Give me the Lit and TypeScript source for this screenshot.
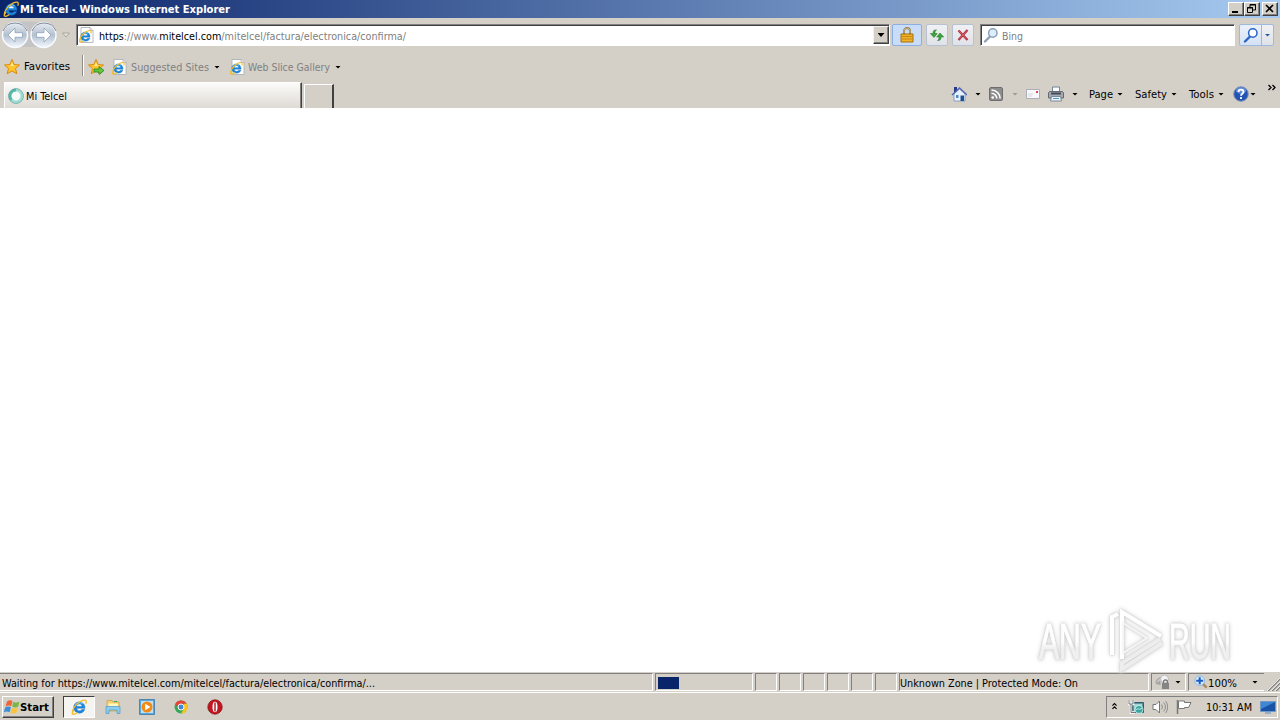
import { LitElement, css, html, svg } from "lit";
import { customElement, property } from "lit/decorators.js";

const ieLetter = svg`
  <path d="M14 9.300H5.800c.2 3 4 3.300 5 1.200h3C12 16 2.700 15.200 2.700 8.500 2.700.9 14.300.9 14 9.300z" fill="#1c86dc" stroke="#1465b4" stroke-width=".4" />
  <path d="M5.900 7.200h4.900C10.500 4.600 6.300 4.600 5.900 7.200z" fill="#e8f5ff" />
  <path d="M4.500 5.500C6 3.700 9 3.200 11.500 4.500" fill="none" stroke="#7fd0fa" stroke-width="1" />
  <path d="M3 11C-.800 16 2.300 16.300 6.500 13.500M1.300 13.200C1.500 8 9.500.9 14 1.200c1.800.2 1.300 2.300.7 3.500" fill="none" stroke="#f2bd2c" stroke-width="1.300" />
`;

const star = svg`<path d="M8 .5l2.200 5 5.300.5-4 3.500 1.300 5.200L8 12l-4.800 2.700 1.300-5.200L.500 6l5.300-.5z" fill="#ffc32b" stroke="#d9820b" stroke-width=".9" /><path d="M8 3l1.200 3.500L12 7H5l2-.8z" fill="#fff0a0" />`;

const glass = (rim: string, fill: string) => svg`
  <path d="M7 9.500L2 14.500" stroke="${rim}" stroke-width="2.400" stroke-linecap="round" />
  <circle cx="9.800" cy="6" r="4.200" fill="${fill}" stroke="${rim}" stroke-width="1.500" />
`;

const arrow = svg`<path d="M12 5L5 12l7 7v-4.700h7.500V9.700H12z" fill="#fff" stroke="#8ba3bd" stroke-width=".8" />`;

const icons: Record<string, unknown> = {
  ie: ieLetter,
  page: svg`<path d="M3 .5h9l3 3v12H3z" fill="#fff" stroke="#a5abb3" stroke-width=".8" /><path d="M12 .5v3h3" fill="#dfe6ef" stroke="#9aa0a8" stroke-width=".6" /><g transform="translate(.5 2.500) scale(.83)">${ieLetter}</g>`,
  star,
  addstar: svg`${star}<path d="M6 10h5V7.500l5 4-5 4V13H6z" fill="#62c83a" stroke="#258522" stroke-width=".8" />`,
  spinner: svg`<circle cx="8" cy="8" r="6" fill="#f4fbfa" stroke="#a0dcd4" stroke-width="3" /><path d="M8 2a6 6 0 0 0-4.500 10" fill="none" stroke="#54b8a9" stroke-width="2.600" /><circle cx="8" cy="8" r="7.500" fill="none" stroke="#579c95" stroke-width=".6" />`,
  lock: svg`<path d="M5 7V4a3 3 0 0 1 6 0v3" fill="none" stroke="#8b7445" stroke-width="1.800" /><path d="M5 6V4a3 3 0 0 1 6 0v2" fill="none" stroke="#e9d9a9" stroke-width=".6" /><path d="M2 7h12v8H2z" fill="#f0b32a" stroke="#a76d0b" /><path d="M3 9.500h10M3 12h10" stroke="#c68719" />`,
  refresh: svg`<path d="M7.500 3C4.800 2.500 4 4 4 6.500H1.300L5 10.500 8.300 6.500H6c0-1.700 0-2.500 1.500-3.500z" fill="#3da33a" stroke="#1c7426" stroke-width=".5" /><path d="M8.500 13.500c2.700.5 3.500-1 3.500-3.500h2.700L11 6 7.700 10H10c0 1.700 0 2.500-1.500 3.500z" fill="#3da33a" stroke="#1c7426" stroke-width=".5" />`,
  stop: svg`<path d="M3.500 3.500L12.500 13M12.500 3L3.500 13" stroke="#a92b3c" stroke-width="2.200" /><path d="M4 4l8 8.500M12 3.500l-8 9" stroke="#ef6f6e" stroke-width=".8" />`,
  glass: glass("#8ba0b5", "#dceefb"),
  search: glass("#2865c4", "#fff"),
  home: svg`<path d="M3 1h3v5H3z" fill="#273a83" /><path d="M3 8l5.500-5L14 8v7H3z" fill="#e9f2fc" stroke="#7a91ba" stroke-width=".8" /><path d="M1 9l7.500-7L16 9" fill="none" stroke="#5268ae" stroke-width="1.500" /><path d="M9.500 9.500H13V15H9.500z" fill="#1c4f91" /><path d="M5 9h2.500v3H5z" fill="#4a8fc1" />`,
  feed: svg`<rect x="1.500" y="1.500" width="13" height="13" rx="1.500" fill="#8c8c8c" stroke="#6e6e6e" /><circle cx="4.700" cy="11.500" r="1.300" fill="#fff" /><path d="M3.500 7.300a5.300 5.300 0 0 1 5.300 5.300M3.500 4a8.600 8.600 0 0 1 8.600 8.600" fill="none" stroke="#fff" stroke-width="1.600" />`,
  mail: svg`<path d="M1.500 3.500h13v9h-13z" fill="#f8f8fc" stroke="#adadb6" /><path d="M3 8h5M3 10h4" stroke="#d4d4dd" /><path d="M11 5h2v2h-2z" fill="#cf4a5a" />`,
  print: svg`<path d="M4.500 1h7v5h-7z" fill="#f8fbff" stroke="#778493" /><path d="M1.500 5.500h13l1 1.500v5H.500V7z" fill="#a2a9b2" stroke="#646b74" /><path d="M3 6.500h10v2H3z" fill="#444b55" /><path d="M3.500 10.500h9l1 4.500h-11z" fill="#eaf3fb" stroke="#7c8996" /><path d="M5 12.500h6" stroke="#4d96c7" />`,
  help: svg`<circle cx="8" cy="8" r="7.300" fill="#2354b4" stroke="#8394b5" /><ellipse cx="8" cy="4.500" rx="5" ry="3.200" fill="#7ca6e8" opacity=".7" /><path d="M5.500 6c0-3.200 5-3.200 5 0 0 1.800-2.500 1.800-2.500 3.800M8 11v2" fill="none" stroke="#fff" stroke-width="1.800" />`,
  privacy: svg`<path d="M1 9C2 4 7 2 10 4" fill="none" stroke="#aaa" stroke-width="1.500" /><path d="M.5 10l5-4v5z" fill="#a5a5a5" /><circle cx="9.500" cy="5" r="4" fill="#f3f3f3" stroke="#bbb" /><path d="M8.500 9.500V8a2 2 0 0 1 4 0v1.500" fill="none" stroke="#777" stroke-width="1.300" /><path d="M7 9h7v6H7z" fill="#858585" />`,
  zoom: svg`<path d="M9.500 9.500l5 5" stroke="#a98d62" stroke-width="2.800" /><circle cx="6.500" cy="6.500" r="5.500" fill="#d6edff" stroke="#85b2e2" /><path d="M6.500 2.500v8M2.500 6.500h8" stroke="#1d5cc4" stroke-width="2.400" />`,
  windows: svg`<path d="M3 2.500c2-1.500 4-1.500 5.500-.3L7.200 7.200C5.500 6 3.500 6.200 1.500 7.500z" fill="#ed6636" /><path d="M9.300 2.700c2 1.200 4 1.100 6.200-.2l-1.300 5c-2 1.200-4 1.300-6 .1z" fill="#78b743" /><path d="M1.200 8.400c2-1.300 4-1.300 5.700-.1l-1.300 5c-2-1.200-4-1-5.800.2z" fill="#398ed6" /><path d="M7.800 8.700c2 1.200 4 1.100 6.100-.1l-1.300 5c-2 1.300-4 1.300-6.100.1z" fill="#f8c33c" />`,
  explorer: svg`<path d="M2 1.500h5l1 1.500h6v9H2z" fill="#f3d16d" stroke="#c8a44b" stroke-width=".8" /><path d="M3.500 4.500H13V8H3.500z" fill="#fff7c3" /><path d="M9 2.500h3" stroke="#45a55c" /><path d="M1 7.500h14v7h-3V11H4v3.500H1z" fill="#8bcdef" stroke="#559fc7" stroke-width=".8" />`,
  media: svg`<path d="M.5.500h15v15H.5z" fill="#58a9df" stroke="#4d86b0" /><path d="M2 2h12v12H2z" fill="#c2e0f3" /><circle cx="8" cy="8" r="5.500" fill="#f18b18" /><path d="M6.200 4.800v6.400L11.500 8z" fill="#fff" />`,
  chrome: svg`<circle cx="8" cy="8" r="6.500" fill="#35a853" /><path d="M8 1.500a6.500 6.500 0 0 1 5.700 3.300H8L5 9.500 2.300 4.800A6.500 6.500 0 0 1 8 1.500z" fill="#e44335" /><path d="M13.700 4.800A6.500 6.500 0 0 1 8 14.500L10.800 10V4.800z" fill="#fac421" /><circle cx="8" cy="8" r="3" fill="#4285d9" stroke="#fff" />`,
  opera: svg`<circle cx="8" cy="8" r="7.200" fill="#c41620" stroke="#800c13" stroke-width=".7" /><ellipse cx="8" cy="8" rx="2.500" ry="5.200" fill="#fff" /><path d="M8 3.500v9" stroke="#b03338" stroke-width="1.600" />`,
  network: svg`<path d="M4.500 3.500h11v10h-11z" fill="#5b91a0" stroke="#375c66" /><path d="M6 5h8v7H6z" fill="#a5d8d6" /><circle cx="11" cy="10.500" r="4" fill="#3aa6a0" stroke="#e8ffff" stroke-width=".7" /><path d="M8 11c2-3 3 1 6-2" stroke="#c7eee8" fill="none" /><path d="M1 1v4h4V1M3 5v8.500h4" fill="none" stroke="#fff" stroke-width="2.400" /><path d="M1 1v4h4V1M3 5v8.500h4" fill="none" stroke="#555" stroke-width=".8" />`,
  sound: svg`<path d="M1 5.500h3L7.500 2v12L4 10.500H1z" fill="#fff" stroke="#777" /><path d="M9.500 5.500q2 2.500 0 5M11.500 3.500q4 4.500 0 9M13.700 2q4 6 0 12" fill="none" stroke="#888" stroke-width=".9" />`,
  flag: svg`<path d="M1.500 1v14" stroke="#777" stroke-width="1.500" /><path d="M2.500 2h6v1.500H15L12.500 8.500H8.500V9.500h-6z" fill="#fff" stroke="#777" />`,
  desktop: svg`<path d="M.5 2.500h15v10H.5z" fill="#1853a5" stroke="#7297c9" /><path d="M1 3h14L1 10z" fill="#4186d3" /><path d="M5 14h6" stroke="#6287b7" />`,
};

@customElement("ie-icon")
export class IeIcon extends LitElement {
  static styles = css`
    :host {
      display: block;
      flex: none;
      width: 16px;
      height: 16px;
    }

    svg {
      display: block;
      width: 100%;
      height: 100%;
    }
  `;

  @property() name = "";

  render() {
    return html`<svg viewBox="0 0 16 16">${icons[this.name]}</svg>`;
  }
}

@customElement("app-root")
export class AppRoot extends LitElement {
  static styles = css`
    :host {
      --face: #d4d0c8;
      --shadow: #808080;
      display: flex;
      flex-direction: column;
      width: 1280px;
      height: 720px;
      overflow: hidden;
      background: var(--face);
      color: #000;
      font: 11px/14px "DejaVu Sans Condensed", "DejaVu Sans", sans-serif;
      font-stretch: condensed;
      white-space: nowrap;
    }

    * {
      box-sizing: border-box;
    }

    .row {
      display: flex;
      align-items: center;
      flex: none;
    }

    .fit {
      display: block;
      flex: none;
      overflow: visible;
      height: 14px;
    }

    .bold {
      font-weight: bold;
    }

    .grey {
      fill: #808080;
    }

    .white {
      fill: #fff;
    }

    .title {
      height: 18px;
      padding: 0 2px 0 3px;
      background: linear-gradient(90deg, #0a246a, #a6caf0);
    }

    .title .fit {
      margin: 0 auto 0 1px;
    }

    .winbtn {
      display: block;
      width: 16px;
      height: 14px;
      background: var(--face);
      border: 1px solid;
      border-color: #fff #404040 #404040 #fff;
      box-shadow: inset -1px -1px var(--shadow);
    }

    .winbtn.close {
      margin-left: 2px;
    }

    .nav {
      height: 36px;
      padding: 0 6px 2px 1px;
    }

    .orbs {
      width: 57px;
      height: 28px;
    }

    .caret {
      flex: none;
      width: 6px;
      height: 3px;
      background: #000;
      clip-path: polygon(0 0, 100% 0, 50% 100%);
    }

    .caret.pale {
      background: #9a9a96;
    }

    .field {
      height: 22px;
      background: #fff;
      border: 1px solid;
      border-color: var(--shadow) #fff #fff var(--shadow);
      box-shadow: inset 1px 1px #404040;
    }

    .address {
      width: 814px;
      padding-left: 1px;
    }

    .address .fit {
      margin: 1px auto 0 5px;
    }

    .drop {
      width: 16px;
      height: 18px;
      justify-content: center;
      background: var(--face);
      border: 1px solid;
      border-color: #f4f2ee #404040 #404040 #f4f2ee;
      box-shadow: inset -1px -1px var(--shadow);
    }

    .drop .caret {
      width: 7px;
      height: 4px;
    }

    .btn {
      width: 22px;
      height: 22px;
      justify-content: center;
      border: 1px solid #b6c2d3;
      border-radius: 2px;
      background: linear-gradient(#f0f1f3, #dfe2e8);
    }

    .btn.secure {
      width: 30px;
      margin: 0 4px 0 2px;
      border-color: #8baee3;
      background: #c9ddf9;
    }

    .btn.halt {
      margin: 0 6px 0 4px;
    }

    .bing {
      width: 255px;
      margin-right: 4px;
      padding-left: 2px;
      gap: 3px;
    }

    .bing .fit {
      margin-top: 1px;
    }

    .btn.go {
      width: 23px;
      border-radius: 2px 0 0 2px;
      border-color: #9eb9df;
      background: linear-gradient(#eaf1fb, #d5e2f4);
    }

    .btn.more {
      width: 13px;
      margin-left: -1px;
      border-radius: 0 2px 2px 0;
      border-color: #9eb9df;
    }

    .btn.more .caret {
      background: #255ca9;
    }

    .favs {
      height: 26px;
      padding-left: 4px;
    }

    .favs .sep {
      width: 2px;
      height: 21px;
      margin: -3px 4px 0 12px;
      border-left: 1px solid #8f8c86;
      border-right: 1px solid #fff;
    }

    .favs .fit {
      margin: 0 5px 0 3px;
    }

    .favs .first {
      margin: -2px 0 0 4px;
    }

    .favs .page {
      margin-left: 7px;
    }

    .favs .page + .fit {
      margin-left: 4px;
    }

    .favs .second {
      margin-left: 9px;
    }

    .tabs {
      height: 28px;
      padding: 0 4px;
      align-items: flex-end;
    }

    .tab {
      width: 298px;
      height: 26px;
      padding-left: 3px;
      gap: 2px;
      border: 1px solid #fff;
      border-bottom: 0;
      border-right: 1px solid #404040;
      box-shadow: inset -1px 0 var(--shadow);
      background: linear-gradient(#fcfbfa, #dedad4);
    }

    .newtab {
      width: 30px;
      height: 24px;
      margin-left: 2px;
      border: 1px solid #fff;
      border-bottom: 0;
      border-right: 2px solid #404040;
    }

    .commands {
      height: 28px;
      margin-left: auto;
    }

    .item {
      gap: 8px;
      margin-right: 7px;
    }

    .item.wide {
      margin-right: 11px;
    }

    .item.menu {
      gap: 4px;
      margin-right: 12px;
    }

    .item.last {
      margin-right: 9px;
    }

    .item.about {
      gap: 1px;
      margin-right: 12px;
    }

    .chevrons {
      width: 8px;
      height: 8px;
      margin: -13px 0 0;
    }

    .page-body {
      position: relative;
      flex: 1;
      background: #fff;
    }

    .watermark {
      position: absolute;
      right: 30px;
      bottom: 0;
      width: 220px;
      height: 67px;
      overflow: visible;
      font-family: "Liberation Sans", sans-serif;
      filter: drop-shadow(0 0 1px #ccc) drop-shadow(0 0 2px #d4d4d4);
    }

    .status {
      height: 21px;
      padding: 1px 0 1px;
      gap: 2px;
      border-bottom: 1px solid #fff;
    }

    .cell {
      flex: none;
      width: 22px;
      height: 18px;
      border: 1px solid;
      border-color: var(--shadow) #fff #fff var(--shadow);
    }

    .cell .fit {
      margin-top: 2px;
    }

    .cell.message {
      width: 653px;
      padding-left: 2px;
      border-left: 0;
    }

    .cell.progress {
      width: 98px;
      padding: 1px 0 0 2px;
    }

    .bar {
      width: 21px;
      height: 12px;
      background: #0a246a;
    }

    .cell.zone {
      width: 250px;
    }

    .cell.privacy {
      width: 35px;
      padding-left: 3px;
      gap: 4px;
    }

    .cell.scale {
      flex: 1;
      padding-left: 5px;
      border-right: 0;
    }

    .cell.scale ie-icon {
      width: 14px;
      height: 14px;
    }

    .cell.scale .caret {
      margin: 0 6px 0 15px;
    }

    .grip {
      width: 14px;
      height: 14px;
      align-self: flex-end;
    }

    .taskbar {
      height: 27px;
      padding: 1px 2px 0;
    }

    .start {
      width: 52px;
      height: 22px;
      padding-left: 1px;
      border: 1px solid;
      border-color: #fff #404040 #404040 #fff;
      box-shadow: inset -1px -1px var(--shadow);
    }

    .running {
      width: 32px;
      height: 22px;
      margin: 0 10px 0 9px;
      justify-content: center;
      border: 1px solid;
      border-color: #404040 #fff #fff #404040;
      background: #f6f4f1;
    }

    .quick {
      gap: 18px;
    }

    .tray {
      width: 172px;
      height: 22px;
      margin-left: auto;
      padding: 0 1px 0 5px;
      gap: 8px;
      border: 1px solid;
      border-color: var(--shadow) #fff #fff var(--shadow);
    }

    .tray .up {
      width: 6px;
      height: 8px;
      margin: -3px 3px 0 0;
    }

    .tray .fit {
      margin: 0 auto 0 6px;
    }
  `;

  label(text: unknown, width: number, cls = "") {
    return html`<svg class="fit ${cls}" width=${width} height="14">
      <text y="11" textLength=${width} lengthAdjust="spacingAndGlyphs">${text}</text>
    </svg>`;
  }

  renderTitle() {
    return html`<div class="row title">
      <ie-icon name="ie"></ie-icon>
      ${this.label("Mi Telcel - Windows Internet Explorer", 210, "bold white")}
      <svg class="winbtn" viewBox="0 0 14 12"><path d="M3 9h6" stroke="#000" stroke-width="2" /></svg>
      <svg class="winbtn" viewBox="0 0 14 12">
        <path d="M5 4V1.500h5.500V7H8M5 2h6M2.500 4.500h5v5h-5zM2 5h6" fill="none" stroke="#000" />
      </svg>
      <svg class="winbtn close" viewBox="0 0 14 12"><path d="M3 2l7 7M10 2L3 9" stroke="#000" stroke-width="1.600" /></svg>
    </div>`;
  }

  renderNav() {
    return html`<div class="row nav">
      <svg class="orbs" viewBox="0 0 57 28">
        <defs>
          <linearGradient id="orb" x2="0" y2="1">
            <stop stop-color="#e8edf3" />
            <stop offset=".5" stop-color="#b4c0cf" />
            <stop offset="1" stop-color="#f2f8ff" />
          </linearGradient>
        </defs>
        <path d="M4 3Q28 -2 52 3L56 14 43 26H14L1 14z" fill="#c4c3c6" />
        <circle cx="14" cy="14" r="12.500" fill="url(#orb)" stroke="#f8fbff" stroke-width="1.500" />
        <circle cx="42.500" cy="14" r="12.500" fill="url(#orb)" stroke="#f8fbff" stroke-width="1.500" />
        <path d="M2 10A13 13 0 0 1 26 10M31 10a13 13 0 0 1 24 0" fill="none" stroke="#7c8796" />
        <g transform="translate(2 2)">${arrow}</g>
        <g transform="translate(55 2) scale(-1 1)">${arrow}</g>
      </svg>
      <svg width="18" height="6" viewBox="0 0 18 6"><path d="M4.500 1h7L8 5z" fill="#e6e3dd" stroke="#aaa69f" /></svg>
      <div class="row field address">
        <ie-icon name="page"></ie-icon>
        ${this.label(
          svg`<tspan>https</tspan><tspan class="grey">://www.</tspan><tspan>mitelcel.com</tspan><tspan class="grey">/mitelcel/factura/electronica/confirma/</tspan>`,
          307
        )}
        <div class="row drop"><i class="caret"></i></div>
      </div>
      <div class="row btn secure"><ie-icon name="lock"></ie-icon></div>
      <div class="row btn"><ie-icon name="refresh"></ie-icon></div>
      <div class="row btn halt"><ie-icon name="stop"></ie-icon></div>
      <div class="row field bing">
        <ie-icon name="glass"></ie-icon>
        ${this.label("Bing", 21, "grey")}
      </div>
      <div class="row btn go"><ie-icon name="search"></ie-icon></div>
      <div class="row btn more"><i class="caret"></i></div>
    </div>`;
  }

  renderFavorites() {
    return html`<div class="row favs">
      <ie-icon name="star"></ie-icon>
      ${this.label("Favorites", 46, "first")}
      <i class="sep"></i>
      <ie-icon name="addstar"></ie-icon>
      <ie-icon class="page" name="page"></ie-icon>
      ${this.label("Suggested Sites", 78, "grey")}
      <i class="caret"></i>
      <ie-icon class="second" name="page"></ie-icon>
      ${this.label("Web Slice Gallery", 82, "grey")}
      <i class="caret"></i>
    </div>`;
  }

  renderTabs() {
    return html`<div class="row tabs">
      <div class="row tab">
        <ie-icon name="spinner"></ie-icon>
        ${this.label("Mi Telcel", 41)}
      </div>
      <div class="newtab"></div>
      <div class="row commands">
        <div class="row item"><ie-icon name="home"></ie-icon><i class="caret"></i></div>
        <div class="row item"><ie-icon name="feed"></ie-icon><i class="caret pale"></i></div>
        <div class="row item"><ie-icon name="mail"></ie-icon></div>
        <div class="row item wide"><ie-icon name="print"></ie-icon><i class="caret"></i></div>
        <div class="row item menu">${this.label("Page", 24)}<i class="caret"></i></div>
        <div class="row item menu">${this.label("Safety", 32)}<i class="caret"></i></div>
        <div class="row item menu last">${this.label("Tools", 25)}<i class="caret"></i></div>
        <div class="row item about"><ie-icon name="help"></ie-icon><i class="caret"></i></div>
        <svg class="chevrons" viewBox="0 0 8 8">
          <path d="M.500 1l2.500 2.500L.500 6M4.500 1L7 3.500 4.500 6" fill="none" stroke="#000" stroke-width="1.300" />
        </svg>
      </div>
    </div>`;
  }

  renderWatermark() {
    return html`<svg class="watermark" viewBox="0 0 220 67">
      <defs>
        <linearGradient id="fade" x2="0" y2="1">
          <stop offset=".5" stop-color="#fff" />
          <stop offset=".62" stop-color="#f0f0f0" />
        </linearGradient>
      </defs>
      <g fill="url(#fade)" stroke="url(#fade)" font-size="50">
        <text x="9" y="54" textLength="62" lengthAdjust="spacingAndGlyphs">ANY</text>
        <text x="139" y="54" textLength="62" lengthAdjust="spacingAndGlyphs">RUN</text>
      </g>
      <g fill="none" stroke-width="4">
        <path d="M82 50V12l6-3" stroke="#fff" />
        <path d="M130 34L92 58v6l40-26" stroke="#ededed" />
        <path d="M92 54V7l39 24" stroke="#fff" />
        <path d="M93 18v30l24-15z" stroke="#f6f6f6" stroke-width="2" />
      </g>
    </svg>`;
  }

  renderStatus() {
    return html`<div class="row status">
      <div class="row cell message">
        ${this.label("Waiting for https://www.mitelcel.com/mitelcel/factura/electronica/confirma/...", 373)}
      </div>
      <div class="row cell progress"><i class="bar"></i></div>
      ${Array.from({ length: 6 }, () => html`<div class="cell"></div>`)}
      <div class="row cell zone">${this.label("Unknown Zone | Protected Mode: On", 178)}</div>
      <div class="row cell privacy">
        <ie-icon name="privacy"></ie-icon><i class="caret"></i>
      </div>
      <div class="row cell scale">
        <ie-icon name="zoom"></ie-icon>
        ${this.label("100%", 29)}
        <i class="caret"></i>
      </div>
      <svg class="grip" viewBox="0 0 14 14">
        <path d="M2 14L14 2M6 14l8-8M10 14l4-4" stroke="#808080" stroke-width="1.500" />
        <path d="M1 14L14 1M5 14l9-9M9 14l5-5" stroke="#fff" stroke-width=".7" />
      </svg>
    </div>`;
  }

  renderTaskbar() {
    return html`<div class="row taskbar">
      <div class="row start">
        <ie-icon name="windows"></ie-icon>
        ${this.label("Start", 29, "bold")}
      </div>
      <div class="row running"><ie-icon name="ie"></ie-icon></div>
      <div class="row quick">
        ${["explorer", "media", "chrome", "opera"].map((name) => html`<ie-icon name=${name}></ie-icon>`)}
      </div>
      <div class="row tray">
        <svg class="up" viewBox="0 0 6 8">
          <path d="M.5 3.500L3 1l2.500 2.500M.5 7.500L3 5l2.500 2.500" fill="none" stroke="#000" stroke-width="1.300" />
        </svg>
        <ie-icon name="network"></ie-icon>
        <ie-icon name="sound"></ie-icon>
        <ie-icon name="flag"></ie-icon>
        ${this.label("10:31 AM", 46)}
        <ie-icon name="desktop"></ie-icon>
      </div>
    </div>`;
  }

  render() {
    return html`
      ${this.renderTitle()} ${this.renderNav()} ${this.renderFavorites()} ${this.renderTabs()}
      <div class="page-body">${this.renderWatermark()}</div>
      ${this.renderStatus()} ${this.renderTaskbar()}
    `;
  }
}
